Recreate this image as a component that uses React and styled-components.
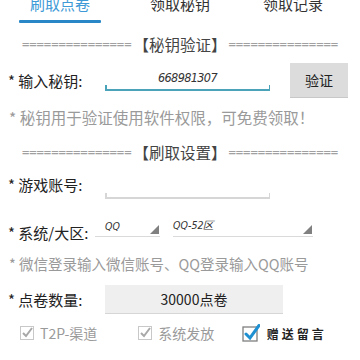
import React from "react";
import styled, { createGlobalStyle } from "styled-components";

const Global = createGlobalStyle`
  html, body { margin: 0; padding: 0; background: #fff; }
  body { font-family: "Noto Sans CJK SC", "Noto Sans", sans-serif; overflow: hidden; }
`;

const Page = styled.div`
  width: 360px;
  height: 360px;
  overflow: hidden;
`;

const TabBar = styled.div`
  display: flex;
  margin-top: -9px;
  height: 32px;
`;

const Tab = styled.div`
  width: 120px;
  flex: none;
  box-sizing: border-box;
  display: flex;
  flex-direction: column;
  align-items: center;
  font-size: 15px;
  line-height: 26px;
  color: ${p => (p.$active ? "#3d9ad6" : "#333")};
  padding-right: ${p => p.$pr || 0}px;
`;

const Underline = styled.div`
  margin-top: 3px;
  width: 82px;
  height: 3px;
  background: #2a87c7;
  border-radius: 1px;
`;

const Divider = styled.div`
  display: flex;
  justify-content: center;
  align-items: center;
  height: 24px;
  margin-top: ${p => p.$mt}px;
  white-space: nowrap;
`;

const Eq = styled.span`
  color: #a0a0a0;
  font-family: "DejaVu Sans Mono", monospace;
  font-size: 12.3px;
  letter-spacing: -0.1px;
`;

const DivTitle = styled.span`
  color: #444;
  font-size: 15.5px;
  margin: 0 2px;
`;

const Row = styled.div`
  display: flex;
  align-items: center;
  height: ${p => p.$h}px;
  margin-top: ${p => p.$mt}px;
  padding-left: 8px;
`;

const Label = styled.div`
  width: 97px;
  font-size: 15px;
  color: #222;
  white-space: nowrap;
`;

const InputLine = styled.div`
  position: relative;
  width: 165px;
  height: 24px;
  margin-bottom: ${p => p.$mb || 0}px;
  display: flex;
  align-items: center;
  justify-content: center;
  border-bottom: 2px solid ${p => (p.$focus ? "#4aa3b8" : "#d6d6d6")};
  &::before, &::after {
    content: "";
    position: absolute;
    bottom: 0;
    width: 1.5px;
    height: 4px;
    background: ${p => (p.$focus ? "#4aa3b8" : "#d6d6d6")};
  }
  &::before { left: 0; }
  &::after { right: 0; }
`;

const Value = styled.span`
  font-family: "DejaVu Sans Condensed", "DejaVu Sans", sans-serif;
  font-style: italic;
  font-size: 12.5px;
  letter-spacing: -0.6px;
  color: #333;
`;

const Button = styled.div`
  margin-left: 20px;
  width: 58px;
  height: 34px;
  background: #dcdcdc;
  border-bottom: 1px solid #c8c8c8;
  display: flex;
  align-items: center;
  justify-content: center;
  font-size: 14px;
  color: #222;
`;

const Hint = styled.div`
  padding-left: 9px;
  font-size: ${p => p.$fs || 15}px;
  color: #9a9a9a;
  height: 24px;
  line-height: 24px;
  margin-top: ${p => p.$mt}px;
  white-space: nowrap;
`;

const Select = styled.div`
  position: relative;
  width: ${p => p.$w}px;
  margin-left: ${p => p.$ml || 0}px;
  margin-bottom: 12px;
  height: 22px;
  border-bottom: 1.5px solid #dadada;
  display: flex;
  align-items: center;
  padding-left: ${p => p.$pl || 0}px;
  box-sizing: border-box;
  font-family: "DejaVu Sans Condensed", sans-serif;
  font-style: italic;
  font-size: 10.5px;
  color: #333;
`;

const Tri = styled.div`
  position: absolute;
  right: 1px;
  bottom: 2px;
  width: 0;
  height: 0;
  border-left: 9px solid transparent;
  border-bottom: 9px solid #808080;
`;

const Box = styled.div`
  width: 178px;
  height: 28px;
  background: #efefef;
  border-bottom: 1px solid #d6d6d6;
  display: flex;
  align-items: center;
  justify-content: center;
  font-size: 14px;
  color: #222;
`;

const Checks = styled.div`
  display: flex;
  align-items: center;
  height: 30px;
  margin-top: 5px;
  padding-left: 20px;
`;

const Check = styled.div`
  display: flex;
  align-items: center;
  width: ${p => p.$w}px;
  font-size: 14px;
  color: ${p => (p.$on ? "#222" : "#9a9a9a")};
  gap: ${p => p.$gap || 6}px;
`;

const Fancy = styled.span`
  font-size: 12px;
  letter-spacing: 3px;
  font-weight: bold;
  color: #222;
`;

function GreyCheck() {
  return (
    <svg width="14" height="14" viewBox="0 0 14 14">
      <rect x="0.5" y="0.5" width="13" height="13" fill="#fff" stroke="#c8c8c8" />
      <path d="M3 7 L6 10 L12 2" fill="none" stroke="#a8a8a8" strokeWidth="2" />
    </svg>
  );
}

function BlueCheck() {
  return (
    <svg width="18" height="18" viewBox="0 0 18 18">
      <rect x="1" y="3" width="14" height="14" fill="#fff" stroke="#7f7f7f" strokeWidth="1.3" />
      <path d="M4 10 L8 14 L17 1.5" fill="none" stroke="#1e8fd0" strokeWidth="3" strokeLinecap="round" />
    </svg>
  );
}

const eq = "===============";

export default function App() {
  return (
    <Page>
      <Global />
      <TabBar>
        <Tab $active>
          刷取点卷
          <Underline />
        </Tab>
        <Tab>领取秘钥</Tab>
        <Tab $pr={14}>领取记录</Tab>
      </TabBar>

      <Divider $mt={9}>
        <Eq>{eq}</Eq>
        <DivTitle>【秘钥验证】</DivTitle>
        <Eq>{eq}</Eq>
      </Divider>

      <Row $h={34} $mt={7}>
        <Label>* 输入秘钥:</Label>
        <InputLine $focus $mb={4}>
          <Value>668981307</Value>
        </InputLine>
        <Button>验证</Button>
      </Row>

      <Hint $mt={8} $fs={15.5}>* 秘钥用于验证使用软件权限，可免费领取！</Hint>

      <Divider $mt={11}>
        <Eq>{eq}</Eq>
        <DivTitle>【刷取设置】</DivTitle>
        <Eq>{eq}</Eq>
      </Divider>

      <Row $h={32} $mt={4}>
        <Label>* 游戏账号:</Label>
        <InputLine $mb={-4} />
      </Row>

      <Row $h={32} $mt={16}>
        <Label>* 系统/大区:</Label>
        <Select $w={65} $ml={-10} $pl={10}>
          QQ
          <Tri />
        </Select>
        <Select $w={140} $ml={13}>
          QQ-52区
          <Tri />
        </Select>
      </Row>

      <Hint $mt={4} $fs={14.5}>* 微信登录输入微信账号、QQ登录输入QQ账号</Hint>

      <Row $h={28} $mt={9}>
        <Label>* 点卷数量:</Label>
        <Box>30000点卷</Box>
      </Row>

      <Checks>
        <Check $w={120}>
          <GreyCheck />
          T2P-渠道
        </Check>
        <Check $w={105}>
          <GreyCheck />
          系统发放
        </Check>
        <Check $w={120} $on $gap={7}>
          <BlueCheck />
          <Fancy>赠送留言</Fancy>
        </Check>
      </Checks>
    </Page>
  );
}
